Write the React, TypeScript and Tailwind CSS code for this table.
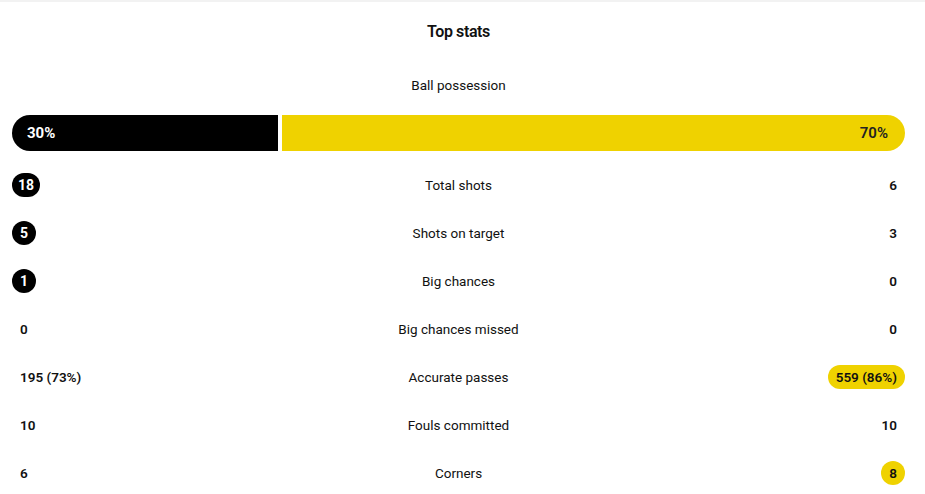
import React from 'react';

type Side = 'plain' | 'dark' | 'yellow';

interface StatRow {
  label: string;
  home: string;
  away: string;
  homeStyle: Side;
  awayStyle: Side;
}

const rows: StatRow[] = [
  { label: 'Total shots', home: '18', away: '6', homeStyle: 'dark', awayStyle: 'plain' },
  { label: 'Shots on target', home: '5', away: '3', homeStyle: 'dark', awayStyle: 'plain' },
  { label: 'Big chances', home: '1', away: '0', homeStyle: 'dark', awayStyle: 'plain' },
  { label: 'Big chances missed', home: '0', away: '0', homeStyle: 'plain', awayStyle: 'plain' },
  { label: 'Accurate passes', home: '195 (73%)', away: '559 (86%)', homeStyle: 'plain', awayStyle: 'yellow' },
  { label: 'Fouls committed', home: '10', away: '10', homeStyle: 'plain', awayStyle: 'plain' },
  { label: 'Corners', home: '6', away: '8', homeStyle: 'plain', awayStyle: 'yellow' },
];

const Value: React.FC<{ value: string; kind: Side }> = ({ value, kind }) => {
  if (kind === 'dark') {
    return (
      <span className="inline-flex h-6 min-w-6 items-center justify-center rounded-full bg-black px-[6px] text-[14px] font-bold text-white">
        {value}
      </span>
    );
  }
  if (kind === 'yellow') {
    return (
      <span className="inline-flex h-6 min-w-6 items-center justify-center rounded-full bg-[#efd200] px-2 text-[13.5px] font-semibold text-[#111]">
        {value}
      </span>
    );
  }
  return <span className="px-2 text-[13.5px] font-semibold text-[#111]">{value}</span>;
};

export default function App() {
  return (
    <div className="min-h-screen w-full border-t-2 border-[#f2f2f2] bg-white font-['Roboto',sans-serif] text-[#111]">
      <div className="w-[917px] px-3 pt-[18px]">
        <h2 className="text-center text-[16px] leading-6 font-semibold tracking-tight">Top stats</h2>

        <p className="mt-[31px] text-center text-[13.5px] leading-5">Ball possession</p>

        <div className="mt-5 flex h-9 w-full gap-1">
          <div className="flex w-[266px] shrink-0 items-center rounded-l-full bg-black pl-[15px] text-[15px] font-bold text-white">
            30%
          </div>
          <div className="flex flex-1 items-center justify-end rounded-r-full bg-[#efd200] pr-[17px] text-[15px] font-semibold text-[#222]">
            70%
          </div>
        </div>

        <div className="mt-[10px] flex flex-col">
          {rows.map((r) => (
            <div key={r.label} className="grid h-12 grid-cols-[1fr_auto_1fr] items-center">
              <div className="flex justify-start">
                <Value value={r.home} kind={r.homeStyle} />
              </div>
              <div className="text-center text-[13.5px]">{r.label}</div>
              <div className="flex justify-end">
                <Value value={r.away} kind={r.awayStyle} />
              </div>
            </div>
          ))}
        </div>
      </div>
    </div>
  );
}
